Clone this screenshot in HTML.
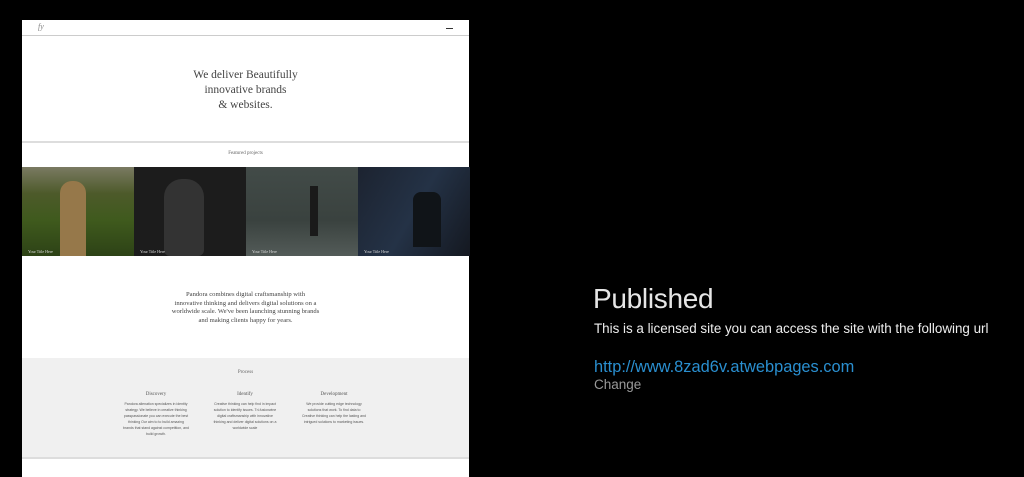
<!DOCTYPE html>
<html><head><meta charset="utf-8"><style>
*{margin:0;padding:0;box-sizing:border-box}
body{width:1024px;height:477px;background:#000;position:relative;overflow:hidden;font-family:"Liberation Sans",sans-serif}
.page{position:absolute;left:22px;top:20px;width:447px;height:457px;background:#fff;font-family:"Liberation Serif",serif;color:#444}
.abs{position:absolute}
.hr{position:absolute;left:0;width:100%;height:1px;background:#ccc}
.c{text-align:center;width:100%}
.img{position:absolute;top:147px;height:89px;width:112px}
.img span{position:absolute;left:6px;bottom:2px;font-size:4px;color:#ddd}
.col{position:absolute;width:66px;text-align:center;font-size:3.5px;line-height:6px;color:#555;font-family:"Liberation Sans",sans-serif}
.col b{display:block;font-weight:normal;font-family:"Liberation Serif",serif;font-size:5px;margin-bottom:3px}
</style></head><body>
<div class="page">
 <div class="abs" style="left:16px;top:2px;font-size:8px;color:#888;font-style:italic">fy</div>
 <div class="abs" style="left:424px;top:8px;width:7px;height:1px;background:#333"></div>
 <div class="hr" style="top:15px"></div>
 <div class="abs c" style="top:48px;font-size:11.5px;line-height:15px;color:#444">We deliver Beautifully<br>innovative brands<br>&amp; websites.</div>
 <div class="hr" style="top:121px;height:2px;background:#ddd"></div>
 <div class="abs c" style="top:131px;font-size:5px;color:#666">Featured projects</div>
 <div class="img" style="left:0;background:linear-gradient(180deg,#7a7a62 0%,#4d5a2a 30%,#3f5a1d 60%,#2d4216 100%)"><div class="abs" style="left:38px;top:14px;width:26px;height:75px;border-radius:12px 12px 0 0;background:#96784a"></div><span>Your Title Here</span></div>
 <div class="img" style="left:112px;background:#1c1c1c"><div class="abs" style="left:30px;top:12px;width:40px;height:77px;border-radius:18px 18px 6px 6px;background:#333"></div><span>Your Title Here</span></div>
 <div class="img" style="left:224px;background:linear-gradient(180deg,#424b48,#3a423f 60%,#535b58)"><div class="abs" style="left:64px;top:19px;width:8px;height:50px;background:#1a1a1a"></div><span>Your Title Here</span></div>
 <div class="img" style="left:336px;background:linear-gradient(120deg,#1c2330,#243246 50%,#141820)"><div class="abs" style="left:55px;top:25px;width:28px;height:55px;background:#101418;border-radius:8px 8px 0 0"></div><span>Your Title Here</span></div>
 <div class="abs c" style="top:271px;font-size:6.6px;line-height:8.6px;color:#444">Pandora combines digital craftsmanship with<br>innovative thinking and delivers digital solutions on a<br>worldwide scale. We've been launching stunning brands<br>and making clients happy for years.</div>
 <div class="abs" style="left:0;top:338px;width:447px;height:99px;background:#f0f0f0"></div>
 <div class="abs c" style="top:350px;font-size:5px;color:#666">Process</div>
 <div class="col" style="left:101px;top:372px"><b>Discovery</b>Pandora alienation specializes in identity strategy. We believe in creative thinking passpassionate you can execute the best thinking Our aim to to build amazing brands that stand against competition, and build growth.</div>
 <div class="col" style="left:190px;top:372px"><b>Identify</b>Creative thinking can help find in impact solution to identify issues. Tri-fusionwine digital craftsmanship with innovative thinking and deliver digital solutions on a worldwide scale</div>
 <div class="col" style="left:279px;top:372px"><b>Development</b>We provide cutting edge technology solutions that work. To find data to Creative thinking can help the lasting and intrigued solutions to marketing issues.</div>
 <div class="hr" style="top:437px;height:2px;background:#ddd"></div>
</div>
<div class="abs" style="left:593px;top:283px;font-size:28px;color:#e6e6e6;letter-spacing:-0.3px">Published</div>
<div class="abs" style="left:594px;top:321px;font-size:13.4px;color:#eee">This is a licensed site you can access the site with the following url</div>
<div class="abs" style="left:594px;top:358px;font-size:16.4px;color:#2a8fd0">http://www.8zad6v.atwebpages.com</div>
<div class="abs" style="left:594px;top:377px;font-size:13.5px;color:#999">Change</div>
</body></html>
